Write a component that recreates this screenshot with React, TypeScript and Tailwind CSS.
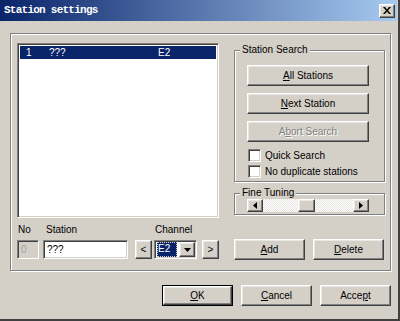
import React from "react";

const btn =
  "flex items-center justify-center bg-[#d4d0c8] border border-t-white border-l-white border-r-[#404040] border-b-[#404040] shadow-[inset_-1px_-1px_0_#808080,inset_1px_1px_0_#e9e7e3] text-[10px] leading-none text-black";

const sunken =
  "border border-t-[#808080] border-l-[#808080] border-r-white border-b-white shadow-[inset_1px_1px_0_#404040,inset_-1px_-1px_0_#d4d0c8]";

const etched = "border border-[#808080] shadow-[inset_1px_1px_0_#fff,1px_1px_0_#fff]";

function Group({ label, className, children }: { label: string; className: string; children?: React.ReactNode }) {
  return (
    <div className={`relative ${etched} ${className}`}>
      <span className="absolute left-[5px] -top-[7px] px-[2px] bg-[#d4d0c8] text-[10px] leading-[12px] text-black">
        {label}
      </span>
      {children}
    </div>
  );
}

function Check({ label }: { label: string }) {
  return (
    <div className="flex items-center h-[13px]">
      <div className={`w-[13px] h-[13px] bg-white ${sunken}`} />
      <span className="ml-[4px] text-[10px] leading-none text-black">{label}</span>
    </div>
  );
}

function Tri({ dir }: { dir: "left" | "right" | "down" }) {
  if (dir === "down")
    return (
      <svg width="7" height="4" viewBox="0 0 7 4">
        <polygon points="0,0 7,0 3.5,4" fill="#000" />
      </svg>
    );
  return (
    <svg width="4" height="7" viewBox="0 0 4 7">
      <polygon points={dir === "left" ? "4,0 4,7 0,3.5" : "0,0 0,7 4,3.5"} fill="#000" />
    </svg>
  );
}

export default function App() {
  return (
    <div className="w-[400px] h-[321px] bg-[#d4d0c8] flex flex-col border-r-2 border-b-2 border-r-[#404040] border-b-[#404040] overflow-hidden font-[Liberation_Sans,Arial,sans-serif]">
      {/* Title bar */}
      <div className="h-[21px] shrink-0 mr-[1px] flex items-center justify-between pl-[4px] pr-[2px] bg-[linear-gradient(to_right,#0a246a,#a6caf0)]">
        <span className="text-white font-bold text-[11px] tracking-[-0.75px] font-[Liberation_Mono,monospace] leading-none">
          Station settings
        </span>
        <div className={`${btn} w-[16px] h-[14px]`}>
          <svg width="8" height="7" viewBox="0 0 8 7">
            <path d="M0,0 L2,0 L4,2.5 L6,0 L8,0 L5,3.5 L8,7 L6,7 L4,4.5 L2,7 L0,7 L3,3.5 Z" fill="#000" />
          </svg>
        </div>
      </div>

      {/* Main frame */}
      <div className={`ml-[10px] mt-[12px] w-[381px] h-[238px] shrink-0 flex ${etched}`}>
        {/* Left column */}
        <div className="ml-[6px] mt-[9px] w-[202px] flex flex-col">
          <div className={`h-[175px] bg-white ${sunken} p-[2px]`}>
            <div className="h-[13px] bg-[#0a246a] text-white text-[10px] leading-[13px] flex">
              <span className="ml-[6px] w-[23px]">1</span>
              <span className="w-[109px]">???</span>
              <span>E2</span>
            </div>
          </div>
          <div className="mt-[6px] h-[12px] flex text-[10px] leading-[12px] text-black pl-[1px]">
            <span className="w-[28px]">No</span>
            <span className="w-[109px]">Station</span>
            <span>Channel</span>
          </div>
          <div className="mt-[4px] h-[19px] flex">
            <div className={`w-[22px] h-[19px] bg-[#d4d0c8] ${sunken} text-[10px] leading-[17px] pl-[3px] text-[#a0a0a0]`}>0</div>
            <div className={`ml-[4px] w-[85px] h-[19px] bg-white ${sunken} text-[10px] leading-[17px] pl-[3px] text-black`}>???</div>
            <div className={`${btn} ml-[7px] w-[17px] h-[19px]`}>&lt;</div>
            <div className={`ml-[2px] w-[43px] h-[19px] bg-white ${sunken} flex items-center pl-[2px] pr-[1px]`}>
              <span className="h-[15px] w-[20px] bg-[#0a246a] text-white text-[10px] leading-[13px] pl-[1px] outline outline-1 outline-dotted outline-[#d4d0c8] -outline-offset-1">
                E2
              </span>
              <div className={`${btn} ml-auto w-[16px] h-[15px]`}>
                <Tri dir="down" />
              </div>
            </div>
            <div className={`${btn} ml-[5px] w-[17px] h-[19px]`}>&gt;</div>
          </div>
        </div>

        {/* Right column */}
        <div className="ml-[15px] w-[151px] flex flex-col">
          <Group label="Station Search" className="mt-[16px] h-[132px] flex flex-col pl-[12px]">
            <div className={`${btn} mt-[14px] w-[122px] h-[21px]`}>
              <span><span className="underline">A</span>ll Stations</span>
            </div>
            <div className={`${btn} mt-[7px] w-[122px] h-[21px]`}>
              <span><span className="underline">N</span>ext Station</span>
            </div>
            <div className={`${btn} mt-[7px] w-[122px] h-[21px]`}>
              <span className="text-[#808080] [text-shadow:1px_1px_0_#fff]">A<span className="underline">b</span>ort Search</span>
            </div>
            <div className="mt-[7px] ml-[1px]">
              <Check label="Quick Search" />
            </div>
            <div className="mt-[3px] ml-[1px]">
              <Check label="No duplicate stations" />
            </div>
          </Group>
          <Group label="Fine Tuning" className="mt-[11px] h-[22px] pl-[12px] pt-[5px]">
            <div className="w-[122px] h-[13px] flex bg-[repeating-conic-gradient(#ffffff_0_25%,#e6e4df_0_50%)] bg-[length:2px_2px]">
              <div className={`${btn} w-[16px] h-[13px]`}>
                <Tri dir="left" />
              </div>
              <div className={`${btn} ml-[35px] w-[17px] h-[13px]`} />
              <div className={`${btn} ml-auto w-[16px] h-[13px]`}>
                <Tri dir="right" />
              </div>
            </div>
          </Group>
          <div className="mt-[24px] flex">
            <div className={`${btn} w-[71px] h-[21px]`}>
              <span><span className="underline">A</span>dd</span>
            </div>
            <div className={`${btn} ml-[8px] w-[71px] h-[21px]`}>
              <span><span className="underline">D</span>elete</span>
            </div>
          </div>
        </div>
      </div>

      {/* Bottom buttons */}
      <div className="mt-[14px] flex pl-[162px] gap-[8px]">
        <div className="w-[71px] h-[21px] border border-black flex">
          <div className={`${btn} w-full h-full`}>
            <span><span className="underline">O</span>K</span>
          </div>
        </div>
        <div className={`${btn} w-[71px] h-[21px]`}>
          <span><span className="underline">C</span>ancel</span>
        </div>
        <div className={`${btn} w-[71px] h-[21px]`}>
          <span>Acce<span className="underline">p</span>t</span>
        </div>
      </div>
    </div>
  );
}
